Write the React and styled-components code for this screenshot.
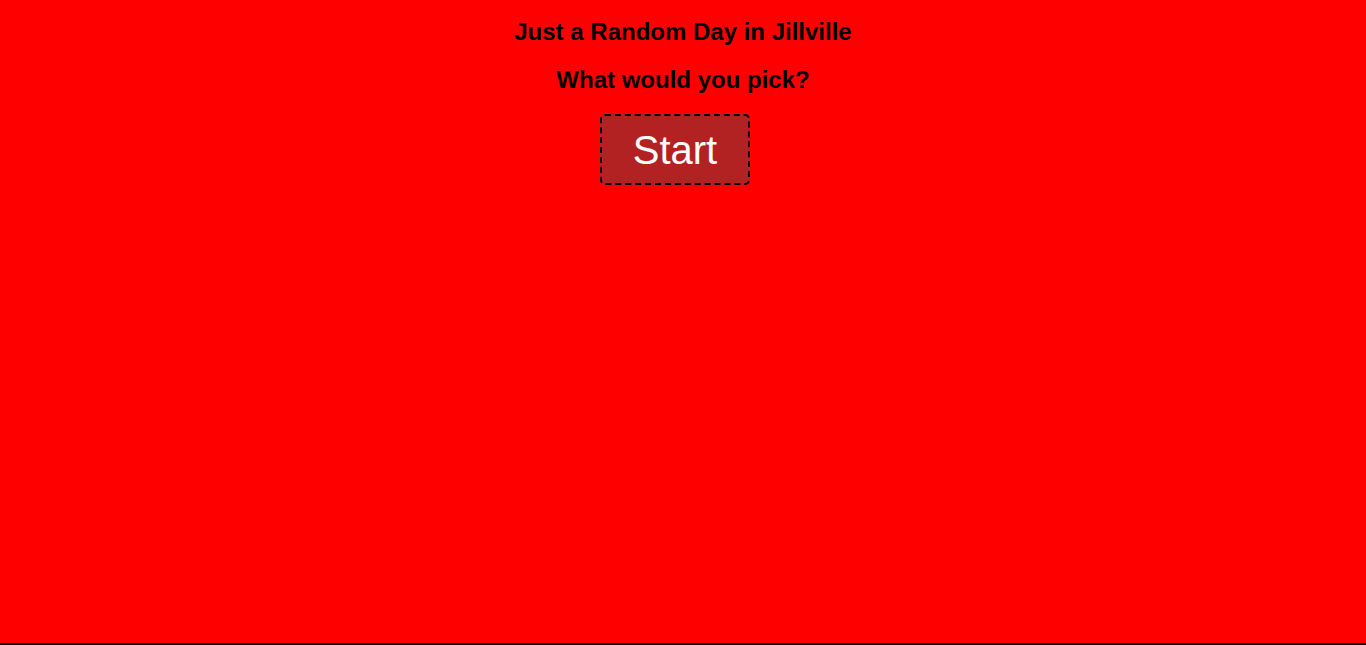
import React from "react";
import styled, { createGlobalStyle } from "styled-components";

const GlobalStyle = createGlobalStyle`
  html, body {
    margin: 0;
    padding: 0;
    background: #000;
  }
`;

const Page = styled.main`
  height: 643px;
  background: #ff0000;
  display: flex;
  flex-direction: column;
  align-items: center;
  font-family: "Liberation Sans", Arial, sans-serif;
  color: #000;
`;

const Heading = styled.h2`
  margin: ${(p) => p.$top}px 0 0;
  font-size: 24px;
  font-weight: bold;
  line-height: 28px;
`;

const StartButton = styled.button`
  margin: 20px 16px 0 0;
  width: 150px;
  height: 71px;
  box-sizing: border-box;
  background: #b22222;
  color: #fff;
  border: 2px dashed #000;
  border-radius: 5px;
  font-family: "Liberation Sans", Arial, sans-serif;
  font-size: 40px;
  line-height: 1;
  padding: 0;
  cursor: pointer;
`;

export default function App() {
  return (
    <>
      <GlobalStyle />
      <Page>
        <Heading $top={18}>Just a Random Day in Jillville</Heading>
        <Heading $top={20}>What would you pick?</Heading>
        <StartButton>Start</StartButton>
      </Page>
    </>
  );
}
